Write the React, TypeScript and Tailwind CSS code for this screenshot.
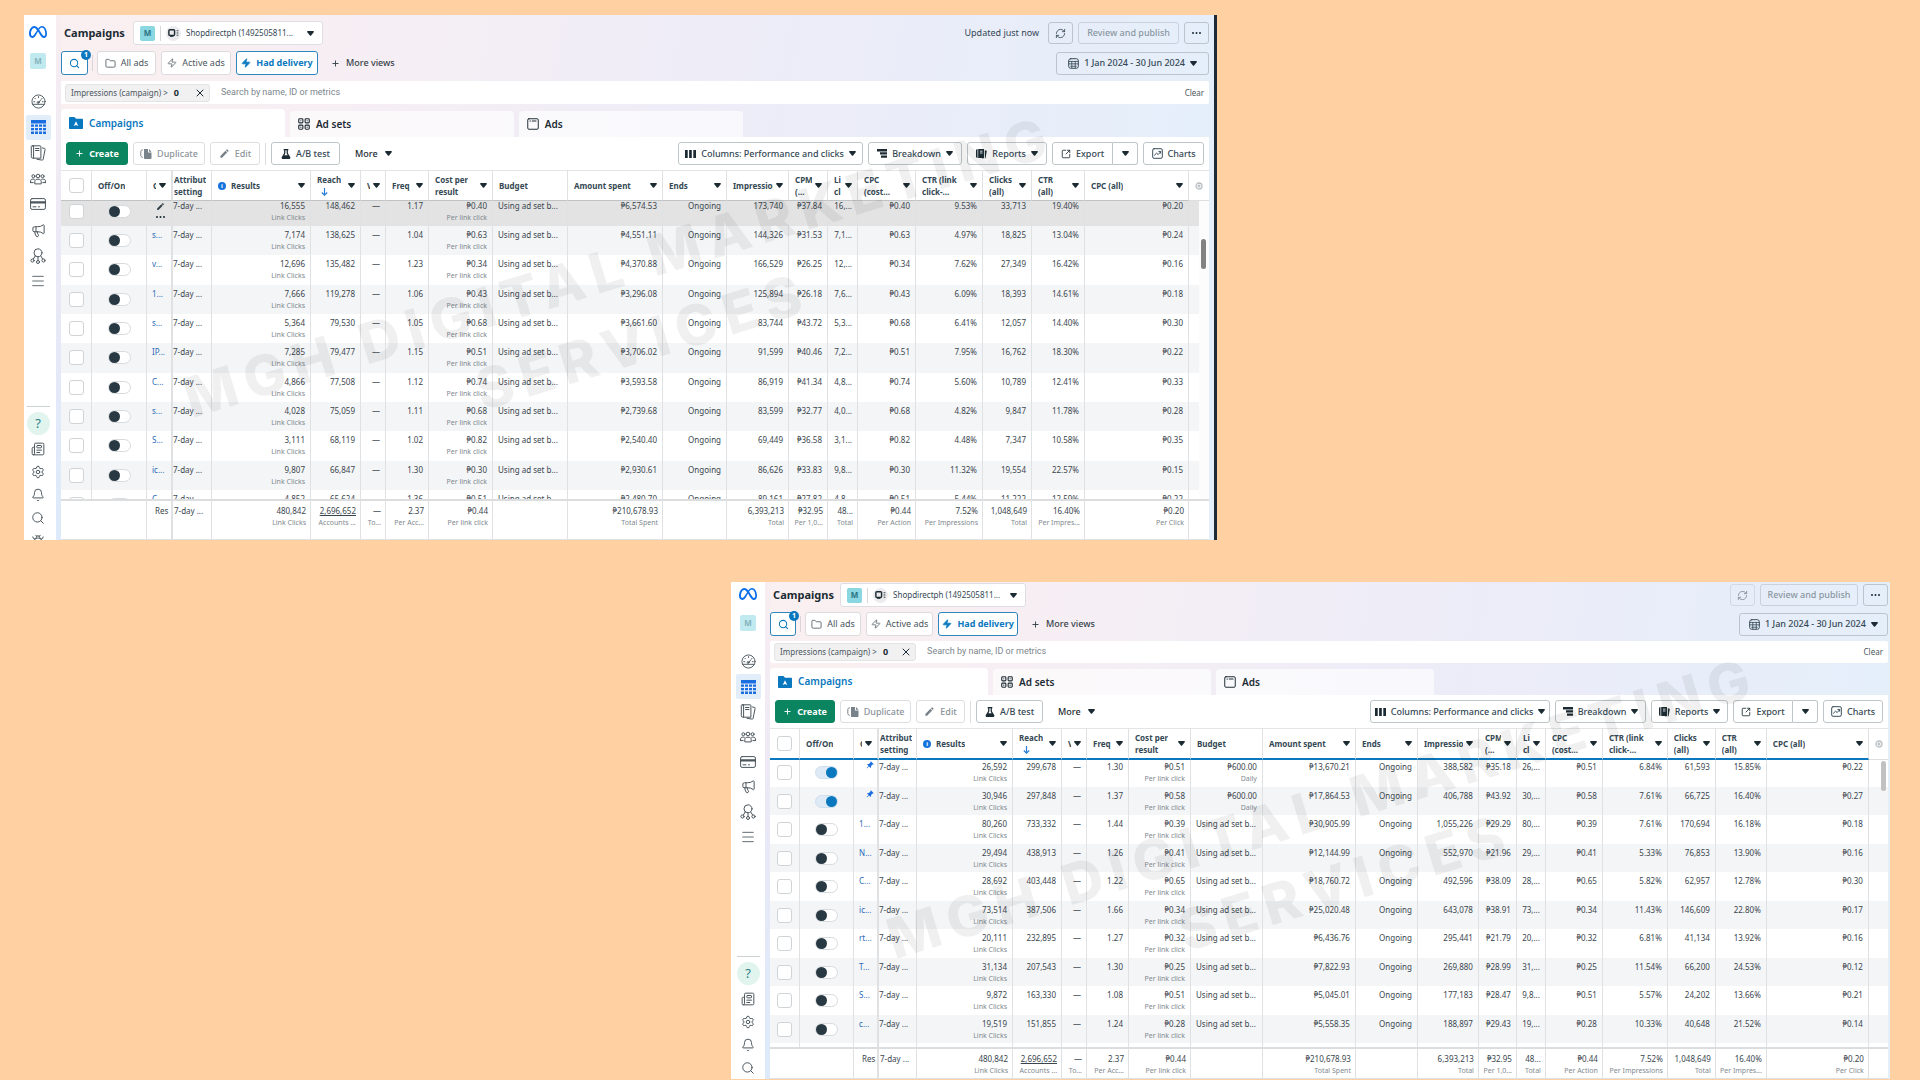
import type { ReactNode } from 'react';
import clsx from 'clsx';
import { Bell, Bug, Folder, Megaphone, Menu, Newspaper, Plus, RefreshCw, Search, Settings, SquareArrowOutUpRight, X, Zap } from 'lucide-react';
import { FaFlask, FaMeta } from 'react-icons/fa6';
import { MdEdit } from 'react-icons/md';
import { BsPinAngleFill } from 'react-icons/bs';

type Row = string[];

type View = {
  id: string;
  panel: string;
  sidebar: string;
  nav: string;
  footNav: string;
  bug: boolean;
  strip: string;
  top: string;
  title: string;
  account: string;
  updated: boolean;
  review: string;
  date: string;
  views: { find: string; all: string; active: string; had: string };
  filterBar: string;
  chip: string;
  tabs: string;
  tools: { create: string; dup: string; edit: string; ab: string; columns: string; breakdown: string; reports: string; exp: string; charts: string };
  headEdge: string;
  cols: number[];
  rowHeights: string[];
  firstRow: string;
  lastRow: string;
  hoverFirst: boolean;
  pinned: number;
  foot: string;
  thumb: string;
  mark: string;
  rows: Row[];
};

// name, results, reach, freq, cost, budget, spent, impressions, cpm, link, cpc, link ctr, clicks, ctr, cpc all
const JUNE: Row[] = [
  ['', '16,555', '148,462', '1.17', '₱0.40', '', '₱6,574.53', '173,740', '₱37.84', '16,...', '₱0.40', '9.53%', '33,713', '19.40%', '₱0.20'],
  ['s...', '7,174', '138,625', '1.04', '₱0.63', '', '₱4,551.11', '144,326', '₱31.53', '7,1...', '₱0.63', '4.97%', '18,825', '13.04%', '₱0.24'],
  ['v...', '12,696', '135,482', '1.23', '₱0.34', '', '₱4,370.88', '166,529', '₱26.25', '12,...', '₱0.34', '7.62%', '27,349', '16.42%', '₱0.16'],
  ['1...', '7,666', '119,278', '1.06', '₱0.43', '', '₱3,296.08', '125,894', '₱26.18', '7,6...', '₱0.43', '6.09%', '18,393', '14.61%', '₱0.18'],
  ['s...', '5,364', '79,530', '1.05', '₱0.68', '', '₱3,661.60', '83,744', '₱43.72', '5,3...', '₱0.68', '6.41%', '12,057', '14.40%', '₱0.30'],
  ['IP...', '7,285', '79,477', '1.15', '₱0.51', '', '₱3,706.02', '91,599', '₱40.46', '7,2...', '₱0.51', '7.95%', '16,762', '18.30%', '₱0.22'],
  ['C...', '4,866', '77,508', '1.12', '₱0.74', '', '₱3,593.58', '86,919', '₱41.34', '4,8...', '₱0.74', '5.60%', '10,789', '12.41%', '₱0.33'],
  ['s...', '4,028', '75,059', '1.11', '₱0.68', '', '₱2,739.68', '83,599', '₱32.77', '4,0...', '₱0.68', '4.82%', '9,847', '11.78%', '₱0.28'],
  ['S...', '3,111', '68,119', '1.02', '₱0.82', '', '₱2,540.40', '69,449', '₱36.58', '3,1...', '₱0.82', '4.48%', '7,347', '10.58%', '₱0.35'],
  ['ic...', '9,807', '66,847', '1.30', '₱0.30', '', '₱2,930.61', '86,626', '₱33.83', '9,8...', '₱0.30', '11.32%', '19,554', '22.57%', '₱0.15'],
  ['C...', '4,852', '65,624', '1.36', '₱0.51', '', '₱2,480.70', '89,161', '₱27.82', '4,8...', '₱0.51', '5.44%', '11,222', '12.59%', '₱0.22'],
];

const TOP: Row[] = [
  ['', '26,592', '299,678', '1.30', '₱0.51', '₱600.00', '₱13,670.21', '388,582', '₱35.18', '26,...', '₱0.51', '6.84%', '61,593', '15.85%', '₱0.22'],
  ['', '30,946', '297,848', '1.37', '₱0.58', '₱600.00', '₱17,864.53', '406,788', '₱43.92', '30,...', '₱0.58', '7.61%', '66,725', '16.40%', '₱0.27'],
  ['1...', '80,260', '733,332', '1.44', '₱0.39', '', '₱30,905.99', '1,055,226', '₱29.29', '80,...', '₱0.39', '7.61%', '170,694', '16.18%', '₱0.18'],
  ['N...', '29,494', '438,913', '1.26', '₱0.41', '', '₱12,144.99', '552,970', '₱21.96', '29,...', '₱0.41', '5.33%', '76,853', '13.90%', '₱0.16'],
  ['C...', '28,692', '403,448', '1.22', '₱0.65', '', '₱18,760.72', '492,596', '₱38.09', '28,...', '₱0.65', '5.82%', '62,957', '12.78%', '₱0.30'],
  ['ic...', '73,514', '387,506', '1.66', '₱0.34', '', '₱25,020.48', '643,078', '₱38.91', '73,...', '₱0.34', '11.43%', '146,609', '22.80%', '₱0.17'],
  ['rt...', '20,111', '232,895', '1.27', '₱0.32', '', '₱6,436.76', '295,441', '₱21.79', '20,...', '₱0.32', '6.81%', '41,134', '13.92%', '₱0.16'],
  ['T...', '31,134', '207,543', '1.30', '₱0.25', '', '₱7,822.93', '269,880', '₱28.99', '31,...', '₱0.25', '11.54%', '66,200', '24.53%', '₱0.12'],
  ['S...', '9,872', '163,330', '1.08', '₱0.51', '', '₱5,045.01', '177,183', '₱28.47', '9,8...', '₱0.51', '5.57%', '24,202', '13.66%', '₱0.21'],
  ['c...', '19,519', '151,855', '1.24', '₱0.28', '', '₱5,558.35', '188,897', '₱29.43', '19,...', '₱0.28', '10.33%', '40,648', '21.52%', '₱0.14'],
];

const VIEWS: View[] = [
  {
    id: 'scrolled',
    panel: 'ml-6 w-[62.14%] border-r-[3px] border-[#1c2b36] pr-[5px]',
    sidebar: 'w-8 pr-1 pt-[7px]',
    nav: 'mt-[20px] h-[205px]',
    footNav: '-mb-3',
    bug: true,
    strip: 'pt-[6px]',
    top: 'gap-[6px]',
    title: 'pl-[3px] w-[72px]',
    account: 'w-[190px]',
    updated: true,
    review: 'w-[101px]',
    date: 'w-[153px]',
    views: { find: 'w-[27px]', all: 'w-[59px]', active: 'w-[70px]', had: 'w-[82px]' },
    filterBar: 'mt-[6px] h-[23px]',
    chip: 'w-[145px]',
    tabs: 'h-7',
    tools: { create: 'w-[62px]', dup: 'w-[72px]', edit: 'w-[50px]', ab: 'w-[69px]', columns: 'w-[185px]', breakdown: 'w-[94px]', reports: 'w-[80px]', exp: 'w-[61px]', charts: 'w-[61px]' },
    headEdge: 'h-[31px] border-b border-b-[#bfc3c6]',
    cols: [31, 55, 26, 39, 99, 50, 25, 43, 64, 75, 95, 64, 62, 39, 30, 58, 67, 49, 53, 104, 20],
    rowHeights: ['h-[29px]', 'h-[29px]', 'h-[30px]'],
    firstRow: 'h-[25px]',
    lastRow: 'h-[9px]',
    hoverFirst: true,
    pinned: 0,
    foot: 'h-[41px]',
    thumb: 'right-[3px] top-[69px] bg-[#828282]',
    mark: 'left-[51%] top-[55%]',
    rows: JUNE,
  },
  {
    id: 'top',
    panel: 'ml-auto mr-[30px] w-[60.36%] pr-[2px]',
    sidebar: 'w-[34px] pt-[2px]',
    nav: 'mt-[18px] h-[200px]',
    footNav: '',
    bug: false,
    strip: 'pt-px',
    top: 'gap-[5px]',
    title: 'pl-[3px] w-[70px]',
    account: 'w-[186px]',
    updated: false,
    review: 'w-[98px]',
    date: 'w-[149px]',
    views: { find: 'w-[26px]', all: 'w-[56px]', active: 'w-[67px]', had: 'w-[80px]' },
    filterBar: 'mt-[5px] h-[22px]',
    chip: 'w-[142px]',
    tabs: 'h-[27px]',
    tools: { create: 'w-[60px]', dup: 'w-[71px]', edit: 'w-[49px]', ab: 'w-[67px]', columns: 'w-[180px]', breakdown: 'w-[91px]', reports: 'w-[77px]', exp: 'w-[60px]', charts: 'w-[60px]' },
    headEdge: 'h-[32px] border-b-2 border-b-[#0a78be]',
    cols: [30, 54, 25, 38, 96, 49, 25, 42, 62, 72, 93, 62, 61, 38, 29, 57, 65, 48, 51, 102, 19],
    rowHeights: ['h-[29px]', 'h-[28px]'],
    firstRow: 'h-[27px]',
    lastRow: 'h-1',
    hoverFirst: false,
    pinned: 2,
    foot: 'h-[32px]',
    thumb: 'right-[2px] top-[33px] bg-[#c1c1c1]',
    mark: 'left-[52%] top-[53%]',
    rows: TOP,
  },
];

const HEADERS = ['', 'Off/On', 'C', 'Attribut|setting', 'Results', 'Reach', 'V', 'Freq', 'Cost per|result', 'Budget', 'Amount spent', 'Ends', 'Impressions', 'CPM|(...', 'Li|cl', 'CPC|(cost...', 'CTR (link|click-...', 'Clicks|(all)', 'CTR|(all)', 'CPC (all)', ''];

const TOTALS: [string, string][] = [
  ['480,842', 'Link Clicks'],
  ['2,696,652', 'Accounts ...'],
  ['—', 'To...'],
  ['2.37', 'Per Acc...'],
  ['₱0.44', 'Per link click'],
  ['', ''],
  ['₱210,678.93', 'Total Spent'],
  ['', ''],
  ['6,393,213', 'Total'],
  ['₱32.95', 'Per 1,0...'],
  ['48...', 'Total'],
  ['₱0.44', 'Per Action'],
  ['7.52%', 'Per Impressions'],
  ['1,048,649', 'Total'],
  ['16.40%', 'Per Impres...'],
  ['₱0.20', 'Per Click'],
];

function Caret({ className }: { className?: string }) {
  return (
    <svg viewBox="0 0 7 5" className={clsx('h-[5px] w-[7px] shrink-0 fill-[#1c2b33]', className)} aria-hidden="true">
      <path d="M.9 0h5.2c.8 0 1.1.8.6 1.3L4.1 4.4c-.4.4-.8.4-1.2 0L.3 1.3C-.2.8.1 0 .9 0z" />
    </svg>
  );
}

function Line({ children, className = 'size-[15px]' }: { children: ReactNode; className?: string }) {
  return (
    <svg viewBox="0 0 16 16" fill="none" stroke="currentColor" strokeWidth="1" strokeLinecap="round" strokeLinejoin="round" className={clsx('shrink-0', className)} aria-hidden="true">
      {children}
    </svg>
  );
}

const NAV: { label: string; active?: boolean; icon: ReactNode }[] = [
  {
    label: 'Account overview',
    icon: (
      <Line>
        <circle cx="8" cy="8" r="7" />
        <path d="M1.8 11h12.4M8 9.5l2.5-3.3M8 2.8v1M4.2 4.6l.6.6M11.8 4.6l-.6.6M3 8.2h1M12 8.2h1" />
        <circle cx="7.6" cy="9" r="1" />
      </Line>
    ),
  },
  {
    label: 'Campaigns',
    active: true,
    icon: (
      <svg viewBox="0 0 15 14" className="h-[14px] w-[15px] fill-[#1a6ee0]" aria-hidden="true">
        <path d="M0 0h15v3.4H0zM0 4.6h3v2.2H0zM4 4.6h3v2.2H4zM8 4.6h3v2.2H8zM12 4.6h3v2.2h-3zM0 8h3v2.2H0zM4 8h3v2.2H4zM8 8h3v2.2H8zM12 8h3v2.2h-3zM0 11.4h3V14H0zM4 11.4h3V14H4zM8 11.4h3V14H8zM12 11.4h3V14h-3z" />
      </svg>
    ),
  },
  {
    label: 'Ads reporting',
    icon: (
      <Line className="size-4">
        <path d="M2.5.8h7.6a.8.8 0 0 1 .8.8v11.6h-8a1.6 1.6 0 0 1-1.6-1.6V1.6A.8.8 0 0 1 2.5.8zM3.6.8v12.4M5.5 3.5H9M5.5 5.5H9M12.5 3l2 .4a.8.8 0 0 1 .6 1l-2 10c-.1.5-.5.8-1 .7L7 14.3" />
      </Line>
    ),
  },
  {
    label: 'Audiences',
    icon: (
      <Line className="size-4">
        <circle cx="8" cy="5" r="1.8" />
        <circle cx="3.4" cy="5.2" r="1.5" />
        <circle cx="12.6" cy="5.2" r="1.5" />
        <path d="M4.8 12.5v-2C4.8 9 6 8.2 8 8.2s3.2.8 3.2 2.3v2zM.6 11.6V9.900C.6 8.700 1.600 8.100 3 8.100c.5 0 .9.1 1.300.2M.6 11.6h2.600M15.400 11.600V9.900c0-1.200-1-1.800-2.400-1.800-.5 0-.9.1-1.300.2M15.400 11.600h-2.600" />
      </Line>
    ),
  },
  {
    label: 'Billing',
    icon: (
      <Line className="size-4">
        <rect x=".6" y="2.6" width="14.8" height="10.8" rx="1.5" />
        <path d="M.6 6.4h14.8" strokeWidth="2.4" />
        <path d="M3 10.8h3M8.5 10.8h1" />
      </Line>
    ),
  },
  { label: 'Advertising settings', icon: <Megaphone className="size-[15px]" strokeWidth={1.6} /> },
  {
    label: 'Events manager',
    icon: (
      <Line className="size-4">
        <circle cx="8" cy="4.8" r="4" />
        <circle cx="2.5" cy="12.5" r="1.6" />
        <circle cx="8" cy="14" r="1.5" />
        <circle cx="13.5" cy="12.5" r="1.6" />
        <path d="M5.3 7.8L3.4 11M8 8.8v3.7M10.7 7.8l1.9 3.2" />
      </Line>
    ),
  },
  { label: 'All tools', icon: <Menu className="size-4" strokeWidth={1.3} /> },
];

function Sidebar({ view }: { view: View }) {
  const lower = [Newspaper, Settings, Bell, Search, ...(view.bug ? [Bug] : [])];
  const names = ['News', 'Settings', 'Notifications', 'Search', 'Report a problem'];
  return (
    <aside className={clsx('flex shrink-0 flex-col items-center bg-white text-[#4b565d]', view.sidebar)}>
      <a href="#home" aria-label="Meta" className="grid h-5 place-items-center">
        <FaMeta className="size-[18px] text-[#0a6fe8]" />
      </a>
      <a href="#account" className="mt-[11px] grid size-4 place-items-center rounded-xs bg-[#c1eaf0] text-[8px] font-bold text-[#86b3bb]">
        M
      </a>
      <nav className={clsx('flex flex-col justify-between', view.nav)} aria-label="Tools">
        {NAV.map((item) => (
          <a
            key={item.label}
            href="#tools"
            aria-label={item.label}
            className={clsx('grid size-[25px] place-items-center rounded-xs', item.active && 'bg-[#e1edf8]')}
          >
            {item.icon}
          </a>
        ))}
      </nav>
      <div className={clsx('mt-auto flex flex-col items-center border-t border-[#ccd1d4] pt-[5px]', view.footNav)}>
        <a href="#help" className="mb-[2px] grid size-[23px] place-items-center rounded-full bg-[#e1f4ee] text-[13px] text-[#2c7f86]">
          ?
        </a>
        {lower.map((Icon, i) => (
          <a key={names[i]} href="#more" aria-label={names[i]} className="grid h-[23px] w-4 place-items-center">
            <Icon className="size-[14px]" strokeWidth={1.7} />
          </a>
        ))}
      </div>
    </aside>
  );
}

function Btn({ children, className, ...rest }: { children: ReactNode; className?: string; disabled?: boolean; 'aria-label'?: string }) {
  return (
    <button type="button" className={clsx('flex shrink-0 items-center justify-center gap-[5px] rounded-[3px] border whitespace-nowrap', className)} {...rest}>
      {children}
    </button>
  );
}

function Dots({ className }: { className?: string }) {
  return (
    <svg viewBox="0 0 9 2" className={clsx('h-[2px] w-[9px] fill-[#1c2b33]', className)} aria-hidden="true">
      <circle cx="1" cy="1" r="1" />
      <circle cx="4.5" cy="1" r="1" />
      <circle cx="8" cy="1" r="1" />
    </svg>
  );
}

function TopBar({ view }: { view: View }) {
  return (
    <header className={clsx('flex flex-col', view.top)}>
      <div className="flex h-6 items-center">
        <h2 className={clsx('shrink-0 text-[11px] font-bold text-[#1c2b33]', view.title)}>Campaigns</h2>
        <label className={clsx('flex h-full shrink-0 items-center rounded-[3px] border border-[#dfdfe3] bg-white pl-[6px]', view.account)}>
          <span className="grid size-[15px] shrink-0 place-items-center rounded-xs bg-[#8ad7e1] text-[8px] font-bold text-[#2d7384]">M</span>
          <span className="mx-[5px] h-[15px] w-px shrink-0 bg-[#d5d8da]" />
          <span className="grid size-[15px] shrink-0 place-items-center rounded-full bg-[#ececee]">
            <svg viewBox="0 0 12 9" className="h-2 w-[11px] text-[#1c2b33]" fill="none" stroke="currentColor" aria-hidden="true">
              <rect x=".8" y=".8" width="6.4" height="6.4" rx="1" strokeWidth="1.6" />
              <path d="M2 8.5h4M9.5 2h2M9.5 4.5h2M9.5 7h2" />
            </svg>
          </span>
          <select aria-label="Ad account" className="ml-[5px] min-w-0 flex-1 appearance-none bg-transparent text-[8px] leading-3 text-[#344854]">
            <option>Shopdirectph (1492505811...</option>
          </select>
          <Caret className="mr-[8px]" />
        </label>
        <div className="ml-auto flex h-[22px] items-center gap-[5px] text-[9px] text-[#344854]">
          {view.updated && <span className="mr-1 text-[9px]">Updated just now</span>}
          <Btn aria-label="Refresh" className={clsx('h-full w-[25px]', view.updated ? 'border-[#bcc5ce]' : 'border-[#d2d9e2] text-[#7f8a93]')}>
            <RefreshCw className="size-[11px]" strokeWidth={1.8} />
          </Btn>
          <Btn disabled className={clsx('h-full border-[#c9d2dc] font-medium text-[#8a97a1]', view.review)}>
            Review and publish
          </Btn>
          <Btn aria-label="More" className="h-full w-[25px] border-[#bcc5ce]">
            <Dots />
          </Btn>
        </div>
      </div>

      <div className="flex h-6 items-center gap-[5px] text-[9px] text-[#4b565d]">
        <div className="relative">
          <Btn aria-label="Search filters" className={clsx('h-6 border-[#2f86bd] bg-white text-[#0a78be]', view.views.find)}>
            <Search className="size-[11px]" strokeWidth={2.2} />
          </Btn>
          <span className="absolute -top-px -right-[3px] grid size-[10px] place-items-center rounded-full bg-[#0a78be] text-[7px] font-bold text-white">1</span>
        </div>
        <span className="-mx-px h-4 w-px bg-[#d8d6da]" />
        <Btn className={clsx('h-full border-[#dcdbdf] bg-white', view.views.all)}>
          <Folder className="size-[11px]" strokeWidth={1.8} />
          All ads
        </Btn>
        <Btn className={clsx('h-full border-[#dcdbdf] bg-white', view.views.active)}>
          <Zap className="size-[10px]" strokeWidth={1.8} />
          Active ads
        </Btn>
        <Btn className={clsx('h-full border-[#2f86bd] bg-white font-bold text-[#0a78be]', view.views.had)}>
          <Zap className="size-[10px]" fill="currentColor" />
          Had delivery
        </Btn>
        <Btn className="ml-[7px] h-full border-transparent font-medium text-[#36424a]">
          <Plus className="mr-px size-[9px]" strokeWidth={2.5} />
          More views
        </Btn>
        <Btn className={clsx('ml-auto h-[23px] border-[#bcc5ce] font-medium text-[#344854]', view.date)}>
          <Line className="size-[11px]">
            <rect x="1" y="1" width="14" height="14" rx="3" strokeWidth="1.4" />
            <path d="M1 5h14M1 8.5h14M4 12h8M5.5 5v9M10.5 5v9" strokeWidth="1.2" />
          </Line>
          1 Jan 2024 - 30 Jun 2024
          <Caret />
        </Btn>
      </div>
    </header>
  );
}

function FilterBar({ view }: { view: View }) {
  return (
    <div className={clsx('flex items-center rounded-xs bg-white pr-[5px] pl-1 text-[8px]', view.filterBar)}>
      <span className={clsx('flex h-[18px] shrink-0 items-center rounded-[3px] border border-[#e2e4e6] bg-[#f1f1f2] pl-[5px] text-[#4b565d]', view.chip)}>
        Impressions (campaign) &gt;<b className="ml-[6px] text-[9px] text-[#1c2b33]">0</b>
        <button type="button" aria-label="Remove filter" className="mr-[3px] ml-auto">
          <X className="size-3 text-[#1c2b33]" strokeWidth={2} />
        </button>
      </span>
      <input
        aria-label="Search"
        placeholder="Search by name, ID or metrics"
        className="ml-[11px] min-w-0 flex-1 bg-transparent font-[Roboto,sans-serif] text-[9px] outline-none placeholder:text-[#7c868d]"
      />
      <button type="button" className="text-[#4b565d]">
        Clear
      </button>
    </div>
  );
}

function Tabs({ view }: { view: View }) {
  const tab = 'flex w-[19.5%] items-center gap-[6px] rounded-t-[4px] pl-2 text-[10px] font-semibold';
  return (
    <div role="tablist" className={clsx('mt-[5px] flex items-end gap-[5px]', view.tabs)}>
      <button type="button" role="tab" aria-selected="true" className={clsx(tab, 'h-full bg-white text-[#0a78be]')}>
        <svg viewBox="0 0 14 12" className="h-3 w-[14px] fill-[#0a78be]" aria-hidden="true">
          <path d="M1 0h4.500l1.500 1.800h6c.6 0 1 .4 1 1V11c0 .6-.4 1-1 1H1c-.6 0-1-.4-1-1V1c0-.6.4-1 1-1z" />
          <path d="M7 4.3L9.3 9 7 7.9 4.7 9z" fill="#fff" />
        </svg>
        Campaigns
      </button>
      <button type="button" role="tab" aria-selected="false" className={clsx(tab, 'h-[26px] bg-white/65 text-[#1c2b33]')}>
        <Line className="size-3">
          <rect x="1" y="1" width="5.5" height="5.5" rx="1.2" strokeWidth="1.5" />
          <rect x="9.5" y="1" width="5.5" height="5.5" rx="1.2" strokeWidth="1.5" />
          <rect x="1" y="9.5" width="5.5" height="5.5" rx="1.2" strokeWidth="1.5" />
          <rect x="9.5" y="9.5" width="5.5" height="5.5" rx="1.2" strokeWidth="1.5" />
          <path d="M3.7 3.7h.1M12.2 3.7h.1M3.7 12.2h.1M12.2 12.2h.1" strokeWidth="1.5" />
        </Line>
        Ad sets
      </button>
      <button type="button" role="tab" aria-selected="false" className={clsx(tab, 'h-[26px] bg-white/65 text-[#1c2b33]')}>
        <Line className="size-3">
          <rect x="1" y="1" width="14" height="14" rx="1.5" strokeWidth="1.3" />
          <path d="M4 4h.5M7 4h5" strokeWidth="1.5" />
        </Line>
        Ads
      </button>
    </div>
  );
}

function Toolbar({ view }: { view: View }) {
  const t = view.tools;
  const edge = 'h-[23px] border-[#bfc6ca] font-medium text-[#344854]';
  return (
    <div className="flex h-[33px] items-center gap-[5px] bg-white px-[5px] text-[9px]">
      <Btn className={clsx('h-[23px] gap-2 border-[#0b8560] bg-[#0b8560] font-bold text-white', t.create)}>
        <Plus className="size-[9px]" strokeWidth={2.5} />
        Create
      </Btn>
      <Btn disabled className={clsx('h-[23px] border-[#dcdfe1] font-medium text-[#8b949a]', t.dup)}>
        <svg viewBox="0 0 12 10" className="h-[10px] w-3 fill-[#78828a]" aria-hidden="true">
          <path d="M4 0h4v3.500h3.500V9c0 .5-.4 1-1 1H5c-.5 0-1-.4-1-1zM9 0l2.500 2.700H9z" />
          <path d="M2.800.8C1 1 .8 1.700.8 3v3c0 1.500.5 2 2 2.500" fill="none" stroke="#78828a" />
        </svg>
        Duplicate
      </Btn>
      <Btn disabled className={clsx('h-[23px] border-[#dcdfe1] font-medium text-[#8b949a]', t.edit)}>
        <MdEdit className="size-[11px] text-[#78828a]" />
        Edit
      </Btn>
      <span className="h-[22px] w-px bg-[#dcdfe1]" />
      <Btn className={clsx(edge, t.ab)}>
        <FaFlask className="size-[10px] text-[#1c2b33]" />
        A/B test
      </Btn>
      <Btn className="ml-[9px] h-[23px] gap-[7px] border-transparent font-medium text-[#1c2b33]">
        More
        <Caret />
      </Btn>
      <Btn className={clsx('ml-auto', edge, t.columns)}>
        <svg viewBox="0 0 11 8" className="h-2 w-[11px] fill-[#1c2b33]" aria-hidden="true">
          <path d="M0 0h2.700v8H0zM4.100 0h2.700v8H4.100zM8.300 0H11v8H8.300z" />
        </svg>
        Columns: Performance and clicks
        <Caret />
      </Btn>
      <Btn className={clsx(edge, t.breakdown)}>
        <svg viewBox="0 0 10 9" className="h-[9px] w-[10px] fill-[#1c2b33]" aria-hidden="true">
          <path d="M0 0h10v2.400H0zM3 3.200h7v2.200H3zM4 6.400h6v2.300H4z" />
        </svg>
        Breakdown
        <Caret />
      </Btn>
      <Btn className={clsx(edge, t.reports)}>
        <svg viewBox="0 0 11 10" className="h-[10px] w-[11px] fill-[#1c2b33]" aria-hidden="true">
          <path d="M0 .8L1.500 0v9L0 8.200zM2.200 0H8v9H2.200zM8.800 1.300l2 .5-1.200 7.400-3.600.8v-.4h2.800z" />
          <path d="M4 2.200h2.500M4 4h2.500" stroke="#fff" strokeWidth=".8" />
        </svg>
        Reports
        <Caret />
      </Btn>
      <div className="flex">
        <Btn className={clsx(edge, 'rounded-r-none', t.exp)}>
          <SquareArrowOutUpRight className="size-[10px] text-[#1c2b33]" strokeWidth={2} />
          Export
        </Btn>
        <Btn aria-label="Export options" className={clsx(edge, 'w-[25px] rounded-l-none border-l-0')}>
          <Caret />
        </Btn>
      </div>
      <Btn className={clsx(edge, t.charts)}>
        <Line className="size-[11px]">
          <rect x="1" y="1" width="14" height="14" rx="2" strokeWidth="1.4" />
          <path d="M3.5 10.5l3-3L9 9.500 12.500 5.500M10 5h2.500v2.500" strokeWidth="1.4" />
        </Line>
        Charts
      </Btn>
    </div>
  );
}

function HeadCell({ index, view }: { index: number; view: View }) {
  const lines = HEADERS[index].split('|');
  const plain = index < 2 || index === 3 || index === 9;
  const last = index === 20;
  return (
    <th
      scope="col"
      className={clsx(
        'border-t border-t-[#e2e4e6] bg-white p-0 text-left font-bold text-[#344854]',
        last ? 'border-b border-b-[#dcdfe1]' : clsx('border-r border-r-[#dfe1e3]', view.headEdge),
        index === 2 && 'border-r-2 border-r-[#cfd1d3]',
      )}
    >
      {index === 0 && <input type="checkbox" aria-label="Select all" className="mx-auto block size-[15px] appearance-none rounded-[3px] border border-[#d0d4d6] bg-white" />}
      {last && (
        <svg viewBox="0 0 8 8" className="ml-[6px] size-2" fill="none" stroke="#b9bec2" strokeWidth="1.3" aria-hidden="true">
          <circle cx="4" cy="4" r="3" />
          <path d="M4 2.5v3M2.5 4h3" />
        </svg>
      )}
      {index > 0 && !last && (
        <div className={clsx('flex items-center overflow-hidden leading-3 whitespace-nowrap', index === 3 ? 'pl-px' : 'pl-[6px]')}>
          {index === 4 && (
            <span className="mr-[5px] grid size-2 shrink-0 place-items-center rounded-full bg-[#1673dd] text-[6px] leading-none font-bold text-white">i</span>
          )}
          <span className={clsx('min-w-0 overflow-hidden', !plain && 'mr-[3px]')}>
            {lines.map((line) => (
              <span key={line} className="block">
                {line}
              </span>
            ))}
            {index === 5 && (
              <svg viewBox="0 0 7 8" className="my-[2px] ml-1 h-2 w-[7px]" fill="none" stroke="#2b7fd6" strokeWidth="1.2" aria-hidden="true">
                <path d="M3.5 0v7M.8 4.5l2.700 2.700 2.700-2.700" />
              </svg>
            )}
          </span>
          {!plain && <Caret className="mr-[5px] ml-auto w-[6px]" />}
        </div>
      )}
    </th>
  );
}

function bodyCells(row: Row): [string, string?][] {
  const [, results, reach, freq, cost, budget, spent, impr, cpm, link, cpc, linkCtr, clicks, ctr, cpcAll] = row;
  return [
    [results, 'Link Clicks'],
    [reach],
    ['—'],
    [freq],
    [cost, 'Per link click'],
    budget ? [budget, 'Daily'] : ['Using ad set b...'],
    [spent],
    ['Ongoing'],
    [impr],
    [cpm],
    [link],
    [cpc],
    [linkCtr],
    [clicks],
    [ctr],
    [cpcAll],
  ];
}

function BodyRow({ row, index, view }: { row?: Row; index: number; view: View }) {
  const first = index === 0;
  const clipped = index > 9;
  const height = first ? view.firstRow : clipped ? view.lastRow : view.rowHeights[index % view.rowHeights.length];
  const box = clsx('flex flex-col overflow-hidden', first && 'justify-end', height);
  const hover = first && view.hoverFirst;
  const edge = 'border-r border-r-[#dfe1e3] p-0';
  const on = index < view.pinned;
  return (
    <tr className={clsx(hover ? 'bg-[#e3e3e3]' : index % 2 ? 'bg-[#f4f5f7]' : 'bg-white')}>
      <td className={edge}>
        <div className={box}>
          {row && (
            <div className="grid h-[29px] shrink-0 place-items-center">
              <input type="checkbox" aria-label={`Select row ${index + 1}`} className="size-[15px] appearance-none rounded-[3px] border border-[#d0d4d6] bg-white" />
            </div>
          )}
        </div>
      </td>
      <td className={edge}>
        <div className={box}>
          {row && (
            <div className="grid h-[29px] shrink-0 place-items-center">
              <input
                type="checkbox"
                role="switch"
                aria-label={`Toggle row ${index + 1}`}
                defaultChecked={on}
                className="flex h-[13px] w-[23px] appearance-none items-center rounded-full border border-[#d8dbdd] bg-white before:size-[11px] before:rounded-full before:bg-[#283943] checked:justify-end checked:border-[#cfdfee] checked:bg-[#deebf6] checked:before:bg-[#0a78be]"
              />
            </div>
          )}
        </div>
      </td>
      <td className={clsx(edge, 'border-r-2 border-r-[#cfd1d3]')}>
        <div className={box}>
          {row && (
            <div className="h-[29px] shrink-0 overflow-hidden pt-[3px] pl-[5px]">
              {on ? (
                <BsPinAngleFill className="ml-[7px] size-2 text-[#1a6ee0]" />
              ) : hover ? (
                <span className="flex flex-col pt-[2px] pl-1 text-[#36424a]">
                  <MdEdit className="size-[9px]" />
                  <Dots className="mt-[5px]" />
                </span>
              ) : (
                <a href="#campaign" className="block leading-3 text-[#2a69b8]">
                  {row[0]}
                </a>
              )}
            </div>
          )}
        </div>
      </td>
      <td className={edge}>
        <div className={box}>{row && <div className="h-[29px] shrink-0 pt-[3px] leading-3 whitespace-nowrap">7-day ...</div>}</div>
      </td>
      {(row ? bodyCells(row) : TOTALS.map((): [string, string?] => [''])).map(([value, sub], i) => (
        <td key={i} className={edge}>
          <div className={box}>
            {value && (
              <div className={clsx('h-[29px] shrink-0 px-[5px] pt-[3px] leading-3 whitespace-nowrap', i === 5 && !sub ? 'text-left' : 'text-right')}>
                {value}
                {sub && <span className="block text-[7px] text-[#7f898f]">{sub}</span>}
              </div>
            )}
          </div>
        </td>
      ))}
      <td className={clsx('p-0', view.hoverFirst && 'bg-linear-to-r from-transparent from-50% to-[#fcfcfc] to-50%')} />
    </tr>
  );
}

function CampaignTable({ view }: { view: View }) {
  const total = view.cols.reduce((a, b) => a + b, 0);
  const rows: (Row | undefined)[] = view.rows.length > 10 ? view.rows : [...view.rows, undefined];
  const foot = 'border-t-2 border-r border-b border-t-[#dcddde] border-r-[#dfe1e3] border-b-[#dfe1e3] p-0 align-top whitespace-nowrap leading-3';
  return (
    <div className="relative overflow-hidden bg-white">
      <table className="w-full table-fixed border-separate border-spacing-0 text-[8px] text-[#3a464e]">
        <colgroup>
          {view.cols.map((w, i) => (
            <col key={i} style={{ width: `${(w / total) * 100}%` }} />
          ))}
        </colgroup>
        <thead>
          <tr>
            {HEADERS.map((_, i) => (
              <HeadCell key={i} index={i} view={view} />
            ))}
          </tr>
        </thead>
        <tbody>
          {rows.map((row, i) => (
            <BodyRow key={i} row={row} index={i} view={view} />
          ))}
        </tbody>
        <tfoot>
          <tr className={view.foot}>
            <td className={clsx(foot, 'border-r-0')} />
            <td className={foot} />
            <td className={clsx(foot, 'border-r-2 border-r-[#cfd1d3]')}>
              <div className="overflow-hidden pt-1 pl-2">Res</div>
            </td>
            <td className={foot}>
              <div className="overflow-hidden pt-1 pl-px">7-day ...</div>
            </td>
            {TOTALS.map(([value, sub], i) => (
              <td key={i} className={clsx(foot, 'text-right')}>
                <div className="overflow-hidden pt-1 pr-1">
                  <span className={clsx('block', i === 1 && 'underline')}>{value}</span>
                  <span className="block text-[7px] text-[#7f898f]">{sub}</span>
                </div>
              </td>
            ))}
            <td className={clsx(foot, 'border-r-0')} />
          </tr>
        </tfoot>
      </table>
      <span className={clsx('absolute h-[30px] w-[5px] rounded-full', view.thumb)} />
    </div>
  );
}

function AdsManager({ view }: { view: View }) {
  return (
    <section className={clsx('relative flex overflow-hidden bg-[linear-gradient(100deg,#fbf0f0_0%,#f5eef4_30%,#ececf8_60%,#e3effa_100%)]', view.panel)}>
      <Sidebar view={view} />
      <div className="w-[5px] shrink-0 bg-linear-to-b from-[#f8eef1] via-[#e9e8f6] to-[#dceafa]" />
      <div className={clsx('flex min-w-0 flex-1 flex-col', view.strip)}>
        <TopBar view={view} />
        <FilterBar view={view} />
        <Tabs view={view} />
        <Toolbar view={view} />
        <CampaignTable view={view} />
      </div>
      {/* watermark */}
      <div
        className={clsx(
          'pointer-events-none absolute -translate-x-1/2 -translate-y-1/2 -rotate-[17deg] text-center font-[Inter,sans-serif] text-[56px] leading-[78px] font-extrabold tracking-[0.15em] whitespace-nowrap text-black/6 select-none',
          view.mark,
        )}
      >
        MGH DIGITAL MARKETING
        <br />
        SERVICES
      </div>
    </section>
  );
}

export default function App() {
  return (
    <main className="flex min-h-screen flex-col gap-[42px] overflow-hidden bg-[#ffd0a2] pt-[15px] font-['Noto_Sans','Open_Sans',sans-serif]">
      {VIEWS.map((view) => (
        <AdsManager key={view.id} view={view} />
      ))}
    </main>
  );
}
